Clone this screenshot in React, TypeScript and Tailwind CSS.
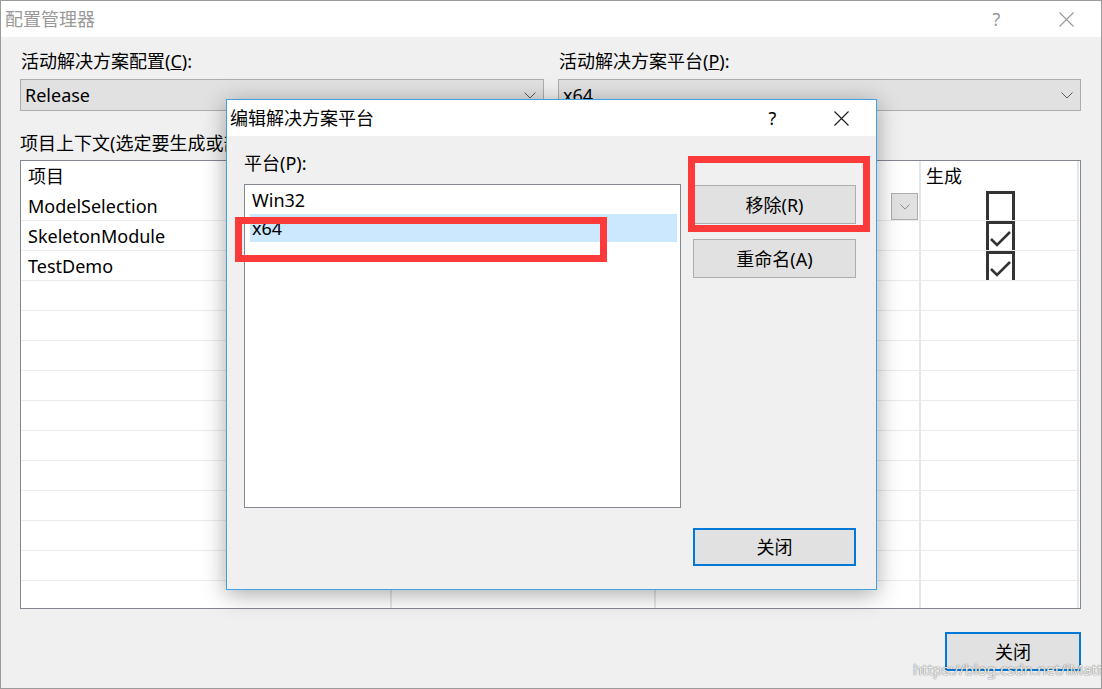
import React from "react";

const ui = "font-['Noto_Sans','Noto_Sans_CJK_SC',sans-serif] text-[18px] leading-[24px] text-black";

const Chevron: React.FC<{ color?: string; w?: number }> = ({ color = "#5a5a5a", w = 12 }) => (
  <svg width={w} height={w / 2 + 1} viewBox="0 0 12 7">
    <path d="M0.5 0.5L6 6L11.5 0.5" fill="none" stroke={color} strokeWidth="1" />
  </svg>
);

const CloseIcon: React.FC<{ color: string }> = ({ color }) => (
  <svg width="15" height="15" viewBox="0 0 15 15">
    <path d="M0.5 0.5L14.5 14.5M14.5 0.5L0.5 14.5" stroke={color} strokeWidth="1.1" />
  </svg>
);

// the grid draws the checkbox as tall as the row, the row line closes it
const CheckBox: React.FC<{ checked: boolean }> = ({ checked }) => (
  <div className="relative w-[29px] h-[29px] border-x-[3px] border-t-[3px] border-[#333333] bg-white">
    {checked && (
      <svg className="absolute left-0 top-[1px]" width="23" height="24" viewBox="0 0 23 24">
        <path d="M2 14L8 20L21 7" fill="none" stroke="#333333" strokeWidth="2.6" />
      </svg>
    )}
  </div>
);

const projects = [
  { name: "ModelSelection", build: false },
  { name: "SkeletonModule", build: true },
  { name: "TestDemo", build: true },
];

const App: React.FC = () => {
  const emptyRows = Array.from({ length: 12 }, (_, i) => i);

  return (
    <div className={`${ui} w-[1102px] h-[689px] relative overflow-hidden border border-[#9b9b9b] bg-[#f0f0f0]`}>
      {/* outer window title */}
      <div className="h-[36px] bg-white flex items-center">
        <span className="pl-[4px] text-[#999999]">配置管理器</span>
        <div className="ml-auto flex h-full">
          <div className="w-[71px] flex items-center justify-center text-[#999999]">?</div>
          <div className="w-[69px] flex items-center justify-center">
            <CloseIcon color="#999999" />
          </div>
        </div>
      </div>

      <div className="pl-[19px] pr-[20px] pt-[12px]">
        <div className="flex gap-[14px]">
          <div className="w-[524px]">
            <div className="pl-[1px]">
              活动解决方案配置(<u>C</u>):
            </div>
            <div className="mt-[6px] h-[32px] border border-[#adadad] bg-[#e1e1e1] flex items-center pl-[4px] pr-[7px]">
              <span>Release</span>
              <span className="ml-auto">
                <Chevron />
              </span>
            </div>
          </div>
          <div className="w-[523px]">
            <div className="pl-[1px]">
              活动解决方案平台(<u>P</u>):
            </div>
            <div className="mt-[6px] h-[32px] border border-[#adadad] bg-[#e1e1e1] flex items-center pl-[4px] pr-[7px]">
              <span>x64</span>
              <span className="ml-auto">
                <Chevron />
              </span>
            </div>
          </div>
        </div>

        <div className="mt-[20px] whitespace-nowrap">项目上下文(选定要生成或部署的项目配置)(R):</div>

        {/* project grid */}
        <div className="mt-[5px] w-[1061px] h-[449px] border border-[#828790] bg-white overflow-hidden">
          <div className="flex h-[30px]">
            <div className="w-[371px] border-r-2 border-[#e3e7ec] pl-[7px] flex items-center">项目</div>
            <div className="w-[264px] border-r-2 border-[#e3e7ec] pl-[6px] flex items-center">配置</div>
            <div className="w-[265px] border-r-2 border-[#e3e7ec] pl-[6px] flex items-center">平台</div>
            <div className="w-[158px] border-r-2 border-[#e3e7ec] pl-[5px] flex items-center">生成</div>
          </div>
          {projects.map((p, i) => (
            <div key={p.name} className="flex h-[30px] border-b border-[#ebebeb]">
              <div className="w-[371px] border-r-2 border-[#e3e7ec] pl-[7px] flex items-center">{p.name}</div>
              <div className="w-[264px] border-r-2 border-[#e3e7ec] pl-[6px] flex items-center">Release</div>
              <div className="w-[265px] border-r-2 border-[#e3e7ec] pl-[6px] flex items-center">
                <span>x64</span>
                {i === 0 && (
                  <div className="ml-auto mr-[1px] mt-[2px] self-stretch w-[27px] border border-[#adadad] bg-[#e1e1e1] flex items-center justify-center">
                    <Chevron color="#777777" w={10} />
                  </div>
                )}
              </div>
              <div className="w-[158px] border-r-2 border-[#e3e7ec] flex justify-center items-end pl-[2px]">
                <CheckBox checked={p.build} />
              </div>
            </div>
          ))}
          {emptyRows.map((r) => (
            <div key={r} className="flex h-[30px] border-b border-[#ebebeb]">
              <div className="w-[371px] border-r-2 border-[#e3e7ec]" />
              <div className="w-[264px] border-r-2 border-[#e3e7ec]" />
              <div className="w-[265px] border-r-2 border-[#e3e7ec]" />
              <div className="w-[158px] border-r-2 border-[#e3e7ec]" />
            </div>
          ))}
        </div>

        <div className="mt-[23px] flex justify-end">
          <button className="w-[136px] h-[39px] border-2 border-[#0078d7] bg-[#e1e1e1] flex items-center justify-center">
            关闭
          </button>
        </div>
      </div>

      {/* edit platforms dialog */}
      <div className="absolute left-[225px] top-[98px] w-[651px] h-[491px] border border-[#41a1e6] bg-[#f0f0f0] shadow-[0_4px_22px_rgba(0,0,0,0.35)] flex flex-col">
        <div className="h-[36px] bg-white flex items-center">
          <span className="pl-[3px]">编辑解决方案平台</span>
          <div className="ml-auto flex h-full">
            <div className="w-[69px] flex items-center justify-center">?</div>
            <div className="w-[69px] flex items-center justify-center">
              <CloseIcon color="#1a1a1a" />
            </div>
          </div>
        </div>
        <div className="pl-[17px] pr-[20px] pt-[15px]">
          <div className="flex justify-between">
            <div>
              <div>平台(P):</div>
              <div className="mt-[9px] w-[437px] h-[324px] border border-[#828790] bg-white pt-[1px] pl-[5px] pr-[3px]">
                <div className="h-[28px] flex items-center pl-[2px]">Win32</div>
                <div className="h-[28px] flex items-center pl-[2px] bg-[#cce8ff]">x64</div>
              </div>
            </div>
            <div className="pt-[34px] flex flex-col gap-[15px]">
              <button className="w-[163px] h-[39px] border border-[#adadad] bg-[#e1e1e1] flex items-center justify-center">
                移除(R)
              </button>
              <button className="w-[163px] h-[39px] border border-[#adadad] bg-[#e1e1e1] flex items-center justify-center">
                重命名(A)
              </button>
            </div>
          </div>
          <div className="mt-[20px] flex justify-end">
            <button className="w-[163px] h-[38px] border-2 border-[#0078d7] bg-[#e1e1e1] flex items-center justify-center">
              关闭
            </button>
          </div>
        </div>
      </div>

      {/* red annotation boxes */}
      <div className="absolute left-[234px] top-[216px] w-[372px] h-[45px] border-[7px] border-[#fd3a3a]" />
      <div className="absolute left-[687px] top-[155px] w-[182px] h-[76px] border-[7px] border-[#fd3a3a]" />

      {/* watermark */}
      <div className="absolute left-[912px] top-[658px] text-[15px] leading-[20px] text-white/90 [text-shadow:0_0_1px_rgba(0,0,0,0.6),0_0_2px_rgba(0,0,0,0.3)]">
        https://blog.csdn.net/iMatt
      </div>
    </div>
  );
};

export default App;
